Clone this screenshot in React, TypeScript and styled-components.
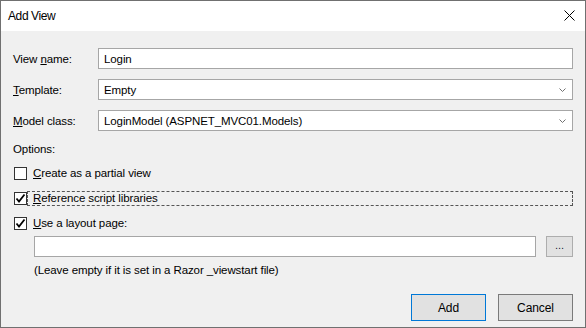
import * as React from 'react';
import styled, { createGlobalStyle } from 'styled-components';

const GlobalStyle = createGlobalStyle`
  html, body {
    margin: 0;
    padding: 0;
    background: #f0f0f0;
  }
  body {
    font-family: 'Liberation Sans', Arial, sans-serif;
    font-size: 11.5px;
    letter-spacing: -0.1px;
    color: #000;
  }
`;

export default function App() {
  return (
    <>
      <GlobalStyle />
      <Window>
        <TitleBar>
          <span className={'title'}>Add View</span>
          <CloseIcon width="11" height="11" viewBox="0 0 11 11">
            <path d="M0.5 0.5 L10.5 10.5 M10.5 0.5 L0.5 10.5" stroke="#000" strokeWidth="1" />
          </CloseIcon>
        </TitleBar>
        <Body>
          <FieldRow>
            <Label>
              View <u>n</u>ame:
            </Label>
            <TextBox>Login</TextBox>
          </FieldRow>
          <FieldRow>
            <Label>
              <u>T</u>emplate:
            </Label>
            <TextBox>
              Empty
              <Chevron />
            </TextBox>
          </FieldRow>
          <FieldRow>
            <Label>
              <u>M</u>odel class:
            </Label>
            <TextBox>
              LoginModel (ASPNET_MVC01.Models)
              <Chevron />
            </TextBox>
          </FieldRow>

          <Caption>Options:</Caption>
          <Check>
            <Box />
            <CheckText>
              <u>C</u>reate as a partial view
            </CheckText>
          </Check>
          <Check>
            <Box checked />
            <CheckText focused>
              <u>R</u>eference script libraries
            </CheckText>
          </Check>
          <Check>
            <Box checked />
            <CheckText>
              <u>U</u>se a layout page:
            </CheckText>
          </Check>

          <LayoutRow>
            <TextBox />
            <SmallButton>...</SmallButton>
          </LayoutRow>
          <Hint>(Leave empty if it is set in a Razor _viewstart file)</Hint>

          <Actions>
            <Button primary>Add</Button>
            <Button>Cancel</Button>
          </Actions>
        </Body>
      </Window>
    </>
  );
}

function Chevron() {
  return (
    <ArrowIcon width="7" height="4" viewBox="0 0 7 4">
      <path d="M0.5 0.5 L3.5 3.5 L6.5 0.5" fill="none" stroke="#707070" strokeWidth="1" />
    </ArrowIcon>
  );
}

function Box({ checked }: { checked?: boolean }) {
  return (
    <CheckBox>
      {checked && (
        <svg width="11" height="11" viewBox="0 0 11 11">
          <path d="M1.5 5.5 L4 8.5 L9.5 1.5" fill="none" stroke="#000" strokeWidth="1.8" />
        </svg>
      )}
    </CheckBox>
  );
}

const Window = styled.div`
  width: 586px;
  height: 328px;
  box-sizing: border-box;
  border: 1px solid #707070;
  display: flex;
  flex-direction: column;
  background: #f0f0f0;
`;

const TitleBar = styled.div`
  height: 30px;
  flex-shrink: 0;
  background: #fff;
  display: flex;
  align-items: center;
  justify-content: space-between;
  padding: 0 10px 0 7px;

  .title {
    font-size: 12px;
    letter-spacing: -0.4px;
    margin-top: -1px;
  }
`;

const CloseIcon = styled.svg`
  display: block;
  margin-top: -1px;
`;

const Body = styled.div`
  flex: 1;
  display: flex;
  flex-direction: column;
  padding: 17px 12px 6px 12px;
`;

const FieldRow = styled.div`
  display: flex;
  align-items: center;
  height: 21px;
  margin-bottom: 10px;
`;

const Label = styled.div`
  width: 85px;
  flex-shrink: 0;
`;

const TextBox = styled.div`
  flex: 1;
  height: 21px;
  box-sizing: border-box;
  border: 1px solid #a6a6a6;
  background: #fff;
  display: flex;
  align-items: center;
  justify-content: space-between;
  padding: 0 6px 0 5px;
`;

const ArrowIcon = styled.svg`
  display: block;
`;

const Caption = styled.div`
  line-height: 16px;
  margin: 0 0 9px 0;
`;

const Check = styled.div`
  display: flex;
  align-items: center;
  height: 15px;
  margin-bottom: 10px;
  padding-left: 1px;
`;

const CheckBox = styled.div`
  width: 13px;
  height: 13px;
  box-sizing: border-box;
  border: 1px solid #333;
  background: #fff;
  display: flex;
  align-items: center;
  justify-content: center;
  flex-shrink: 0;
`;

const CheckText = styled.div<{ focused?: boolean }>`
  flex: 1;
  height: 15px;
  box-sizing: border-box;
  line-height: 13px;
  padding-left: 5px;
  border: 1px dashed ${(p) => (p.focused ? '#555' : 'transparent')};
`;

const LayoutRow = styled.div`
  display: flex;
  gap: 10px;
  padding-left: 21px;
  margin-top: -5px;
`;

const SmallButton = styled.div`
  width: 27px;
  height: 21px;
  box-sizing: border-box;
  border: 1px solid #adadad;
  background: #e1e1e1;
  text-align: center;
  line-height: 17px;
  font-size: 11px;
  color: #1a1a40;
`;

const Hint = styled.div`
  padding-left: 21px;
  margin-top: 5px;
  line-height: 16px;
`;

const Actions = styled.div`
  margin-top: auto;
  display: flex;
  justify-content: flex-end;
  gap: 12px;
`;

const Button = styled.div<{ primary?: boolean }>`
  width: 75px;
  height: 27px;
  box-sizing: border-box;
  border: 1px solid ${(p) => (p.primary ? '#0078d7' : '#7a7a7a')};
  background: #e1e1e1;
  display: flex;
  align-items: center;
  justify-content: center;
  font-size: 12px;
`;
